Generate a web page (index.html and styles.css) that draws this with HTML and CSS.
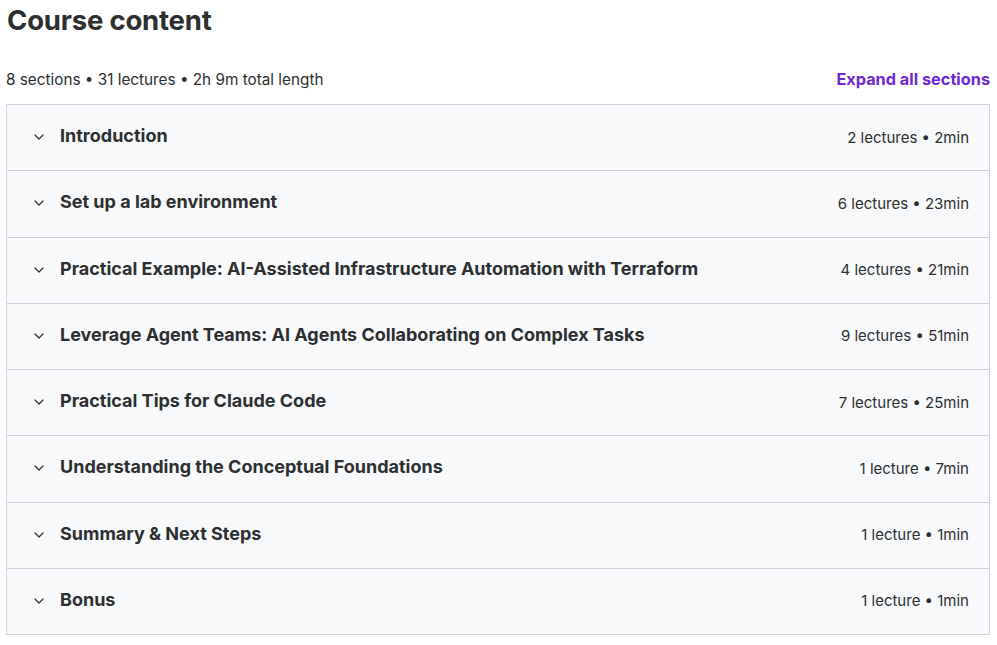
FILE: index.html
```html
<!DOCTYPE html>
<html>
<head>
<meta charset="utf-8">
<link rel="stylesheet" href="styles.css">
</head>
<body>
<div class="page">
  <h2 class="title">Course content</h2>
  <div class="meta">
    <span class="summary">8 sections • 31 lectures • 2h 9m total length</span>
    <button class="expand">Expand all sections</button>
  </div>
  <div class="sections">
    <div class="row"><svg class="chev" viewBox="0 0 24 24"><path d="M6 9l6 6 6-6"/></svg><span class="name">Introduction</span><span class="info">2 lectures • 2min</span></div>
    <div class="row"><svg class="chev" viewBox="0 0 24 24"><path d="M6 9l6 6 6-6"/></svg><span class="name">Set up a lab environment</span><span class="info">6 lectures • 23min</span></div>
    <div class="row"><svg class="chev" viewBox="0 0 24 24"><path d="M6 9l6 6 6-6"/></svg><span class="name">Practical Example: AI-Assisted Infrastructure Automation with Terraform</span><span class="info">4 lectures • 21min</span></div>
    <div class="row"><svg class="chev" viewBox="0 0 24 24"><path d="M6 9l6 6 6-6"/></svg><span class="name">Leverage Agent Teams: AI Agents Collaborating on Complex Tasks</span><span class="info">9 lectures • 51min</span></div>
    <div class="row"><svg class="chev" viewBox="0 0 24 24"><path d="M6 9l6 6 6-6"/></svg><span class="name">Practical Tips for Claude Code</span><span class="info">7 lectures • 25min</span></div>
    <div class="row"><svg class="chev" viewBox="0 0 24 24"><path d="M6 9l6 6 6-6"/></svg><span class="name">Understanding the Conceptual Foundations</span><span class="info">1 lecture • 7min</span></div>
    <div class="row"><svg class="chev" viewBox="0 0 24 24"><path d="M6 9l6 6 6-6"/></svg><span class="name">Summary &amp; Next Steps</span><span class="info">1 lecture • 1min</span></div>
    <div class="row"><svg class="chev" viewBox="0 0 24 24"><path d="M6 9l6 6 6-6"/></svg><span class="name">Bonus</span><span class="info">1 lecture • 1min</span></div>
  </div>
</div>
</body>
</html>
```
FILE: styles.css
```css
html, body {
  margin: 0;
  padding: 0;
  background: #ffffff;
}
body {
  font-family: "Inter", "Liberation Sans", sans-serif;
  color: #2d2f31;
}
.page {
  padding: 0 7px 0 6px;
}
.title {
  margin: 0;
  padding: 3px 0 0 1px;
  font-size: 27.5px;
  font-weight: 700;
  line-height: 34px;
  letter-spacing: -0.2px;
}
.meta {
  display: flex;
  align-items: center;
  justify-content: space-between;
  height: 26px;
  margin-top: 29px;
  margin-bottom: 12px;
}
.summary {
  font-size: 15.3px;
  color: #2d2f31;
}
.expand {
  border: 0;
  background: none;
  padding: 0;
  font-family: inherit;
  font-size: 16.3px;
  font-weight: 700;
  color: #6d28d2;
  cursor: pointer;
}
.sections {
  border: 1px solid #d1d2e0;
  border-top: 0;
}
.row {
  display: flex;
  align-items: center;
  height: 65.25px;
  border-top: 1px solid #d1d2e0;
  background: #f7f9fa;
  padding: 0 20px 0 24px;
  box-sizing: content-box;
}
.chev {
  width: 16px;
  height: 16px;
  fill: none;
  stroke: #2d2f31;
  stroke-width: 1.8;
  stroke-linecap: round;
  stroke-linejoin: round;
  flex: none;
  margin-right: 13px;
  margin-top: -1px;
}
.name {
  flex: 1;
  font-size: 18px;
  font-weight: 700;
  margin-top: -4px;
}
.info {
  font-size: 15px;
  color: #2d2f31;
  font-weight: 400;
  margin-top: -1px;
}
```
